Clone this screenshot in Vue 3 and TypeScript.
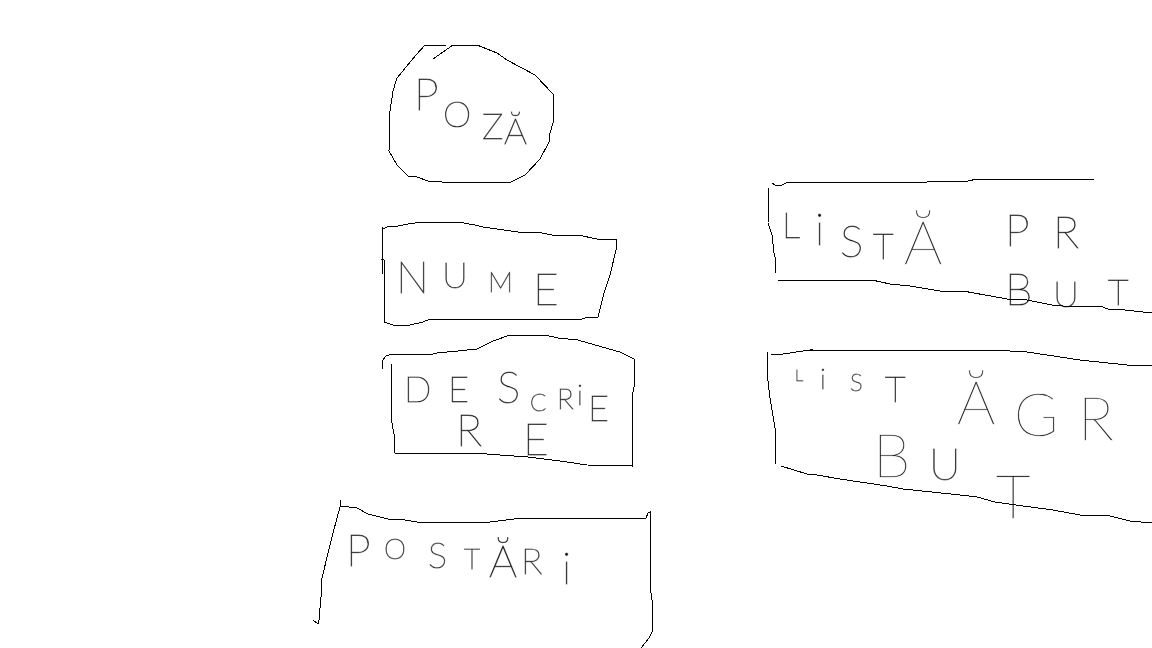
<script setup lang="ts">
type Size = 'xs' | 'sm' | 'md' | 'lg' | 'xl' | 'xxl'
type Letter = [text: string, x: number, baseline: number, size: Size]

interface Panel {
  id: string
  viewBox: string
  strokes: string[]
  letters: Letter[]
}

const profile: Panel[] = [
  {
    id: 'photo',
    viewBox: '312 40 344 172',
    strokes: [
      '446,45 425,45 416,55 397,78 393,91 390,111 389,151 397,165 408,176 417,177 428,181 442,182 511,182 525,175 540,159 549,142 550,133 553,123 553,94 535,75 507,60 497,53 477,45 453,45 433,59',
    ],
    letters: [
      ['P', 414, 110, 'xl'],
      ['O', 443, 127, 'lg'],
      ['Z', 482, 139, 'lg'],
      ['Ă', 504, 144, 'lg'],
    ],
  },
  {
    id: 'name',
    viewBox: '312 220 344 106',
    strokes: [
      '382,227 382,274',
      '383,229 387,227 398,226 408,224 423,222 458,222 475,225 483,227 518,232 537,232 552,235 578,235 597,239 616,239 616,250 610,275 604,293 598,317 585,318 582,319 430,319 423,322 410,325 393,325 384,322 384,260 381,259',
    ],
    letters: [
      ['N', 396, 293, 'xl'],
      ['U', 442, 288, 'lg'],
      ['M', 488, 292, 'md'],
      ['E', 533, 305, 'xl'],
    ],
  },
  {
    id: 'description',
    viewBox: '312 334 344 154',
    strokes: [
      '382,369 382,361 386,356 392,354 433,354 437,353 458,351 477,349 493,341 510,335 545,335 558,338 578,340 595,345 620,352 634,359 635,370 634,387 632,398 632,466 587,465 560,461 528,457 500,455 473,453 395,453 394,434 392,423 391,363',
    ],
    letters: [
      ['D', 404, 402, 'lg'],
      ['E', 448, 402, 'lg'],
      ['S', 497, 403, 'xl'],
      ['C', 530, 411, 'sm'],
      ['R', 557, 409, 'md'],
      ['i', 577, 405, 'md'],
      ['E', 588, 421, 'lg'],
      ['R', 456, 446, 'xl'],
      ['E', 523, 455, 'xl'],
    ],
  },
  {
    id: 'posts',
    viewBox: '312 496 344 152',
    strokes: [
      '340,500 340,506 357,508 368,514 388,519 405,520 417,522 490,522 522,518 646,518 648,513 650,512 650,585 652,600 652,632 649,638 641,648',
      '340,507 333,533 328,553 322,578 321,597 319,620 318,624 313,620',
    ],
    letters: [
      ['P', 346, 566, 'xl'],
      ['O', 384, 559, 'md'],
      ['S', 428, 568, 'lg'],
      ['T', 464, 569, 'md'],
      ['Ă', 489, 577, 'xl'],
      ['R', 521, 574, 'lg'],
      ['i', 562, 584, 'xl'],
    ],
  },
]

const lists: Panel[] = [
  {
    id: 'list-pr',
    viewBox: '764 176 388 162',
    strokes: [
      '772,183 775,185 782,185 788,182 927,182 950,181 968,181 977,179 1092,179 1094,180',
      '769,188 768,223 772,235 774,253 775,257 775,273',
      '778,281 780,280 872,280 890,284 910,286 940,291 963,291 1007,299 1027,300 1052,305 1063,306 1100,306 1108,309 1125,310 1143,312 1152,312',
    ],
    letters: [
      ['L', 782, 238, 'lg'],
      ['i', 815, 245, 'xl'],
      ['S', 840, 257, 'xl'],
      ['T', 873, 259, 'lg'],
      ['Ă ', 904, 264, 'xxl'],
      ['P', 1005, 246, 'xl'],
      ['R ', 1053, 248, 'xl'],
      ['B', 1005, 305, 'xl'],
      ['U', 1053, 307, 'lg'],
      ['T', 1108, 305, 'lg'],
    ],
  },
  {
    id: 'list-gr',
    viewBox: '764 346 388 184',
    strokes: [
      '767,352 767,373 770,398 775,428 775,464',
      '771,354 783,354 810,350 1010,351 1027,352 1080,360 1127,365 1152,366',
      '781,466 807,474 817,475 840,479 887,486 903,489 960,495 977,497 995,502 1023,506 1053,510 1080,515 1110,516 1130,521 1152,523',
    ],
    letters: [
      ['L', 795, 381, 'xs'],
      ['i', 820, 389, 'md'],
      ['S', 850, 391, 'sm'],
      ['T', 885, 402, 'lg'],
      ['Ă ', 957, 424, 'xxl'],
      ['G', 1014, 436, 'xxl'],
      ['R ', 1078, 440, 'xxl'],
      ['B', 873, 477, 'xxl'],
      ['U', 929, 480, 'xl'],
      ['T', 996, 518, 'xxl'],
    ],
  },
]

const columns = [
  { name: 'profile', panels: profile },
  { name: 'lists', panels: lists },
]
</script>

<template>
  <main class="board">
    <div v-for="column in columns" :key="column.name" class="column" :class="column.name">
      <section v-for="panel in column.panels" :key="panel.id" class="panel">
        <svg class="sketch" :viewBox="panel.viewBox">
          <polyline v-for="(points, i) in panel.strokes" :key="i" class="stroke" :points="points" />
          <text class="label"><tspan v-for="([text, x, baseline, size], i) in panel.letters" :key="i" :x="x" :y="baseline" :class="size">{{ text }}</tspan></text>
        </svg>
      </section>
    </div>
  </main>
</template>

<style>
body {
  margin: 0;
  background: #fff;
}
</style>

<style scoped>
.board {
  display: grid;
  grid-template-columns: 344fr 388fr;
  column-gap: 108px;
  align-items: start;
  padding: 40px 0 0 312px;
}

.column {
  display: flex;
  flex-direction: column;
  gap: 8px;
  min-width: 0;
}

.lists {
  padding-top: 136px;
}

.sketch {
  display: block;
  width: 100%;
  height: auto;
  will-change: transform;
}

.stroke {
  fill: none;
  stroke: #000;
  stroke-width: 1px;
  shape-rendering: crispEdges;
}

.label {
  fill: #000;
  stroke: #000;
  stroke-width: 1px;
  stroke-opacity: 0.5;
  font-family: Lato, "Open Sans", sans-serif;
  font-weight: 100;
  white-space: pre;
}

.xs {
  font-size: 16px;
}

.sm {
  font-size: 24px;
}

.md {
  font-size: 28px;
}

.lg {
  font-size: 36px;
}

.xl {
  font-size: 44px;
}

.xxl {
  font-size: 60px;
  stroke-opacity: 0.2;
}
</style>
